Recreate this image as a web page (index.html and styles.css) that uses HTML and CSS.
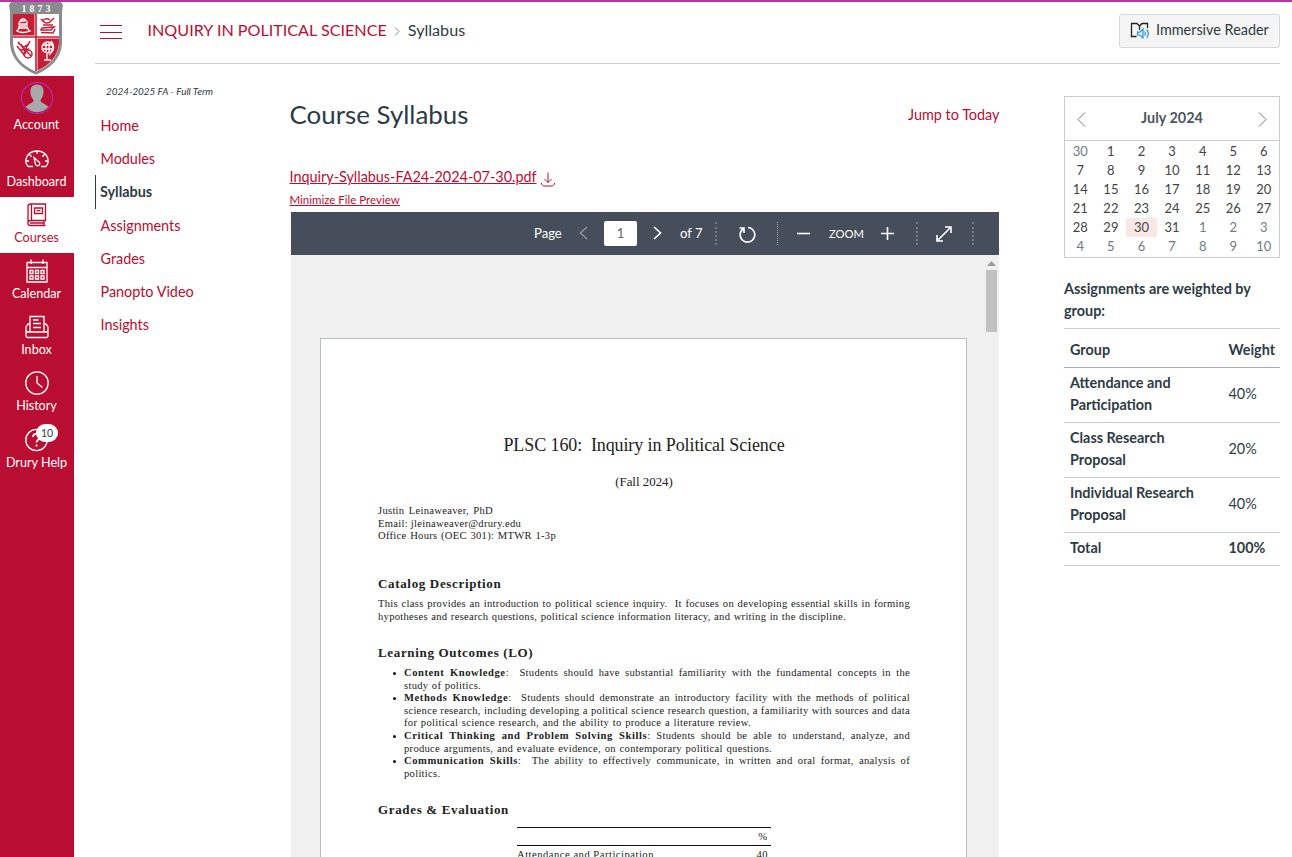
FILE: index.html
```html
<!DOCTYPE html>
<html lang="en">
<head>
<meta charset="utf-8">
<title>Course Syllabus</title>
<link rel="stylesheet" href="styles.css">
</head>
<body>
<div class="app">
  <nav class="rail">
    <a class="logo">
      <svg width="74" height="74" viewBox="0 2 74 74">
        <path d="M11 2H61L63 5L62 12V42C62 58 50 69 36 74.500C22 69 10 58 10 42V12L9 5Z" fill="#888a8e"/>
        <path d="M13 14H59V42C59 56 50 66 36 71.500C22 66 13 56 13 42Z" fill="#fff"/>
        <path d="M13 14H34.500V35.500H13ZM37.500 38.500H59V43C58 56 50 65 37.500 70.500Z" fill="#c51f35"/>
        <path d="M36 14V71M13 37H59" stroke="#c51f35" stroke-width="1.600"/>
        <text x="37.500" y="12" class="logo-year">1873</text>
        <g fill="none" stroke="#fff" stroke-width="1.300">
          <path d="M16.500 31Q20 29 19 23Q23 15 27 22Q26 29 30 31Q23 34 16.500 31M18 28H28M21 21H25M20 24H27M20 26H26" />
          <circle cx="47.500" cy="47.500" r="5.500"/><path d="M43 45H52M43 49H52M46 42V53M49 42V53M51 41Q57 49 49 55M47 54V59M44 60H51"/>
        </g>
        <g fill="none" stroke="#c51f35" stroke-width="1.500"><path d="M41 19Q46 26 51 21L54 18M42 21Q46 17 50 20M43 25H53M42 28L54 27L51 30L41 30ZM41 32.500L53 33L55 29"/><path d="M18 42L31 56M30 41L24 52M18 43L24 47L29 44M20 50L29 49M17 46L25 56M21 44L26 54"/><circle cx="28" cy="54" r="4"/></g>
      </svg>
    </a>
    <a class="rail-item account"><svg width="32" height="32" viewBox="0 0 32 32"><circle cx="16" cy="16" r="15.500" fill="#b90e31" stroke="#b52b9b"/><path stroke="none" d="M16 2.500C20.500 2.500 23 6 22.500 10C22.500 14 21 16 19.500 18C19.500 20 21 20.500 27.500 24.500A14.500 14.500 0 0 1 4.500 24.500C11 20.500 12.500 20 12.500 18C11 16 9.500 14 9.500 10C9 6 11.500 2.500 16 2.500Z" fill="#a7a9ab"/></svg><span>Account</span></a>
    <a class="rail-item"><svg width="24" height="24" viewBox="0 0 24 24"><path d="M3.200 19.500C.8 17 .5 13.500 1.200 11.500C3 6 7 4 12 4S21 6 22.800 11.500C23.500 14 23 17.500 20.800 19.500H16M3.200 19.500H8M12 4V7M4.500 7.500L6.700 9.700M19.500 7.500L17.300 9.700M1 14H4M20 14H23M9 10.500L10.500 17.500A2.200 2.200 0 1 0 14.500 15.500Z"/></svg><span>Dashboard</span></a>
    <a class="rail-item active"><svg width="24" height="24" viewBox="0 0 24 24"><path d="M5.500 1H20.500V17.500H5.500C2 17.500 2 22.500 5.500 22.500H20.500M5.500 1C3.800 1 3 2 3 3.500V20M6.500 1V17.500M9.500 5H17.500V10.500H9.500ZM11.500 7.700H15.500M19 17.500V22.500M5 20H19"/></svg><span>Courses</span></a>
    <a class="rail-item"><svg width="24" height="24" viewBox="0 0 24 24"><path d="M2 3.500H22V23H2ZM2 8.500H22M6 .5V5M18 .5V5M5 11.500H8V14.500H5ZM10.500 11.500H13.500V14.500H10.500ZM16 11.500H19V14.500H16ZM5 17H8V20H5ZM10.500 17H13.500V20H10.500ZM16 17H19V20H16Z"/></svg><span>Calendar</span></a>
    <a class="rail-item"><svg width="24" height="24" viewBox="0 0 24 24"><path d="M5 16.500V1.500H19V16.500M5 9H3L1 12V21Q1 22.500 2.500 22.500H21.500Q23 22.500 23 21V12L21 9H19M1 15Q1 17 3 17H21Q23 17 23 15M8 5H13.500M8 8.500H16M8 12.500H16"/></svg><span>Inbox</span></a>
    <a class="rail-item"><svg width="24" height="24" viewBox="0 0 24 24"><circle cx="12" cy="12" r="11.200"/><path d="M12 5V12L17.500 16.500"/></svg><span>History</span></a>
    <a class="rail-item help"><svg width="24" height="24" viewBox="0 0 24 24"><circle cx="11.500" cy="12" r="10.700"/><path d="M8 9C8 4.500 15 5 15 9C15 12 11.500 11.500 11.500 14.500M11.500 16.500V18.500" stroke-width="1.700"/></svg><b class="badge">10</b><span>Drury Help</span></a>
  </nav>
  <div class="page">
    <header class="top">
      <svg class="burger" width="22" height="16" viewBox="0 0 22 16"><path d="M0 1.500H22M0 8.500H22M0 14.500H22"/></svg>
      <span class="crumb">INQUIRY IN POLITICAL SCIENCE</span>
      <svg class="crumb-sep" width="6" height="9" viewBox="0 0 6 9"><path d="M1 .5L5 4.500L1 8.500"/></svg>
      <span class="crumb-here">Syllabus</span>
      <button class="reader"><svg width="20" height="17" viewBox="0 0 20 17"><path d="M6.500 14.500H1.500V1.500H7L9.500 4L12 1.500H17.500V6M9.500 4V8" fill="none" stroke="#222" stroke-width="1.300"/><path d="M7.500 10.200H10L13 7V16L10 13H7.500ZM14.700 9.500Q16 11.500 14.700 13.800M16.700 7.500Q20 11.500 16.700 16" fill="#f5f5f5" stroke="#2196dc" stroke-width="1.200"/></svg><span>Immersive Reader</span></button>
    </header>
    <div class="body">
      <nav class="menu">
        <div class="term">2024-2025 FA - Full Term</div>
        <a>Home</a><a>Modules</a><a class="on">Syllabus</a><a>Assignments</a><a>Grades</a><a>Panopto Video</a><a>Insights</a>
      </nav>
      <main class="content">
        <div class="title-row"><h1>Course Syllabus</h1><a class="jump">Jump to Today</a></div>
        <div class="file"><a>Inquiry-Syllabus-FA24-2024-07-30.pdf</a><svg width="14" height="15" viewBox="0 0 14 15"><path d="M7 .5V10.500M3.500 7L7 10.500L10.500 7M.5 11V12L2.500 14H11.500L13.500 12V11"/></svg></div>
        <div class="mini"><a>Minimize File Preview</a></div>
        <section class="viewer">
          <div class="toolbar">
            <span class="pg">Page</span>
            <svg class="prev" width="9" height="14" viewBox="0 0 9 14"><path d="M8 1L1.500 7L8 13"/></svg>
            <span class="num">1</span>
            <svg class="next" width="9" height="14" viewBox="0 0 9 14"><path d="M1 1L7.500 7L1 13"/></svg>
            <span class="of">of 7</span>
            <i class="sep wide"></i>
            <svg class="rot" width="17" height="17" viewBox="0 0 17 17"><path d="M9 1.500A7.300 7.300 0 1 1 4 3M.5 2H5V7"/></svg>
            <i class="sep"></i>
            <svg class="minus" width="13" height="13" viewBox="0 0 13 13"><path d="M0 6.500H13"/></svg>
            <span class="zoom">ZOOM</span>
            <svg class="plus" width="13" height="13" viewBox="0 0 13 13"><path d="M0 6.500H13M6.500 0V13"/></svg>
            <i class="sep wide"></i>
            <svg class="full" width="16" height="16" viewBox="0 0 16 16"><path d="M1.500 14.500L14.500 1.500M9 1H15V7M1 9V15H7"/></svg>
            <i class="sep wide"></i>
          </div>
          <div class="pane">
            <article class="sheet">
              <h2>PLSC 160: &nbsp;Inquiry in Political Science</h2>
              <div class="sub">(Fall 2024)</div>
              <div class="who">
                <div class="ln w1">Justin Leinaweaver, PhD</div>
                <div class="ln w2">Email: jleinaweaver@drury.edu</div>
                <div class="ln w3">Office Hours (OEC 301): MTWR 1-3p</div>
              </div>
              <h3 class="h-a">Catalog Description</h3>
              <div class="ln">This class provides an introduction to political science inquiry. &nbsp;It focuses on developing essential skills in forming</div>
              <div class="ln w4">hypotheses and research questions, political science information literacy, and writing in the discipline.</div>
              <h3 class="h-b">Learning Outcomes (LO)</h3>
              <ul>
                <li><div class="ln"><b>Content Knowledge</b>: &nbsp;Students should have substantial familiarity with the fundamental concepts in the</div><div class="ln w5">study of politics.</div></li>
                <li><div class="ln"><b>Methods Knowledge</b>: &nbsp;Students should demonstrate an introductory facility with the methods of political</div><div class="ln">science research, including developing a political science research question, a familiarity with sources and data</div><div class="ln w6">for political science research, and the ability to produce a literature review.</div></li>
                <li><div class="ln"><b>Critical Thinking and Problem Solving Skills</b>: Students should be able to understand, analyze, and</div><div class="ln w7">produce arguments, and evaluate evidence, on contemporary political questions.</div></li>
                <li><div class="ln"><b>Communication Skills</b>: &nbsp;The ability to effectively communicate, in written and oral format, analysis of</div><div class="ln w8">politics.</div></li>
              </ul>
              <h3 class="h-c">Grades &amp; Evaluation</h3>
              <div class="grades"><div class="g-head">%</div><div class="g-row"><span>Attendance and Participation</span><span>40</span></div></div>
            </article>
            <div class="scroll"><svg width="9" height="5" viewBox="0 0 9 5"><path d="M0 5L4.500 0L9 5Z" fill="#9b9b9b"/></svg><div class="thumb"></div></div>
          </div>
        </section>
      </main>
      <aside class="side">
        <div class="cal">
          <div class="cal-head"><svg width="9" height="15" viewBox="0 0 9 15"><path d="M8 .5L1 7.500L8 14.500"/></svg><b>July 2024</b><svg width="9" height="15" viewBox="0 0 9 15"><path d="M1 .5L8 7.500L1 14.500"/></svg></div>
          <div class="days">
            <i>30</i><span>1</span><span>2</span><span>3</span><span>4</span><span>5</span><span>6</span>
            <span>7</span><span>8</span><span>9</span><span>10</span><span>11</span><span>12</span><span>13</span>
            <span>14</span><span>15</span><span>16</span><span>17</span><span>18</span><span>19</span><span>20</span>
            <span>21</span><span>22</span><span>23</span><span>24</span><span>25</span><span>26</span><span>27</span>
            <span>28</span><span>29</span><span class="today">30</span><span>31</span><i>1</i><i>2</i><i>3</i>
            <i>4</i><i>5</i><i>6</i><i>7</i><i>8</i><i>9</i><i>10</i>
          </div>
        </div>
        <div class="w-title">Assignments are weighted by group:</div>
        <div class="weights">
          <div class="wr wh"><b>Group</b><b>Weight</b></div>
          <div class="wr"><b>Attendance and Participation</b><span>40%</span></div>
          <div class="wr"><b>Class Research Proposal</b><span>20%</span></div>
          <div class="wr"><b>Individual Research Proposal</b><span>40%</span></div>
          <div class="wr wt"><b>Total</b><b>100%</b></div>
        </div>
      </aside>
    </div>
  </div>
</div>
</body>
</html>
```
FILE: styles.css
```css
* { box-sizing: border-box; }
body { margin: 0; height: 857px; overflow: hidden; background: #fff; color: #2d3b45; font: 14.4px/22px Lato, sans-serif; }
svg { display: block; flex: none; }
h1, h2, h3, ul { margin: 0; padding: 0; font-weight: 400; }
.app { height: 857px; display: flex; border-top: 2px solid #bf32a4; overflow: hidden; }
.rail { width: 74px; flex: none; background: #b90e31; }
.logo { display: block; height: 74px; background: #fff; }
.logo-year { font: bold 10px "Liberation Serif", serif; letter-spacing: 3px; text-anchor: middle; fill: #fff; }
.rail-item { position: relative; height: 56.2px; padding: 6px 1px 0 0; display: flex; flex-direction: column; align-items: center; color: #fff; font-size: 12.6px; line-height: 18px; white-space: nowrap; }
.rail-item svg { fill: none; stroke: currentColor; stroke-width: 1.3; }
.rail-item span { margin-top: 2px; }
.rail-item.account { height: 64.6px; }
.rail-item.active { background: #fff; color: #b90e31; }
.badge { position: absolute; left: 36px; top: 2px; width: 22px; height: 18px; border-radius: 9px; background: #fff; color: #2d3b45; font-weight: 400; font-size: 10.5px; line-height: 18px; text-align: center; }
.page { flex: 1; padding: 0 12px 0 21px; }
.top { height: 62px; border-bottom: 1px solid #c7cdd1; display: flex; align-items: center; padding-left: 5px; padding-bottom: 4px; white-space: nowrap; }
.burger { stroke: #b90e31; stroke-width: 1.2; margin: 3px 25.5px 0 0; }
.crumb { color: #b90e31; font-size: 16.15px; padding-bottom: 1px; }
.crumb-sep { margin: 2px 8px 0 7px; fill: none; stroke: #7d878e; }
.crumb-here { font-size: 16.15px; padding-bottom: 1px; }
.reader { margin-left: auto; width: 161px; height: 34px; border: 1px solid #d5d9dc; border-radius: 3px; background: #f5f5f5; color: #2d3b45; font: 14.4px Lato, sans-serif; display: flex; align-items: center; gap: 6px; padding: 0 0 2px 10px; white-space: nowrap; }
.reader svg { margin-top: 2px; }
.body { display: flex; }
.menu { width: 194.500px; padding-top: 17px; }
.menu .term { padding-left: 11px; font-size: 9.9px; font-style: italic; line-height: 20px; height: 28.2px; }
.menu a { display: block; height: 33.15px; line-height: 33px; padding-left: 5.500px; color: #b90e31; }
.menu a.on { border-left: 1px solid #2d3b45; padding-left: 4px; color: #2d3b45; font-weight: 700; }
.content { width: 710px; }
.title-row { display: flex; justify-content: space-between; align-items: center; padding-top: 30px; height: 70px; }
h1 { font-size: 25.9px; line-height: 40px; }
.jump { color: #b90e31; padding-top: 2px; }
.file { display: flex; height: 22px; margin-top: 32px; color: #b90e31; gap: 4px; align-items: center; }
.file a, .mini a { text-decoration: underline; color: #b90e31; white-space: nowrap; }
.file svg { fill: none; stroke: #b90e31; margin-top: 4px; }
.mini { height: 24px; line-height: 24px; font-size: 11.5px; }
.viewer { width: 708px; margin-left: 1.500px; }
.toolbar { height: 43px; background: #474e5b; color: #fff; display: flex; align-items: center; font-size: 13.1px; white-space: nowrap; padding: 0 0 1px 243px; }
.toolbar svg { fill: none; stroke: #fff; stroke-width: 1.6; }
.pg { width: 45px; }
.toolbar .prev { stroke: #8b919a; }
.num { width: 33px; height: 25px; margin: 1px 16px 0 16px; border-radius: 2px; background: #fff; color: #666; text-align: center; line-height: 25px; }
.of { margin-left: 18px; width: 35px; }
.sep { height: 23px; border-left: 1px dotted #9aa0a8; width: 1px; }
.sep.wide { border-left: 2px dotted #747a85; width: 2px; }
.rot { margin: 2px 21px 0 22px; }
.minus { margin: 1px 19px 0; }
.zoom { font-size: 11.2px; width: 33px; padding-top: 1px; }
.plus { margin: 1px 22px 0 19px; }
.full { margin: 1px 20px 0 18px; }
.pane { height: 610px; background: #f0f0f0; display: flex; overflow: hidden; padding: 83px 0 0 29px; }
.sheet { width: 647px; height: 900px; flex: none; background: #fff; border: 1px solid #b8bdc3; padding: 94px 56px 0 57px; font-family: "Liberation Serif", serif; color: #222; }
h2 { font-size: 18px; line-height: 24px; text-align: center; white-space: nowrap; letter-spacing: -.1px; }
.sub { margin-top: 15px; font-size: 12.900px; line-height: 20px; text-align: center; }
.who { margin-top: 13px; }
.ln { font-size: 10.600px; line-height: 12.600px; height: 12.600px; text-align: justify; text-align-last: justify; white-space: nowrap; letter-spacing: .28px; }
.ln b { letter-spacing: .56px; }
.w1 { width: 115px; } .w2 { width: 142px; } .w3 { width: 178px; } .w4 { width: 468px; } .w5 { width: 77px; } .w6 { width: 347px; } .w7 { width: 368px; } .w8 { width: 36px; }
h3 { font-size: 13px; line-height: 18px; height: 18px; font-weight: 700; letter-spacing: .66px; }
.h-a { margin: 32px 0 5.4px; }
.h-b { margin: 20.6px 0 5px; }
.h-c { margin: 21px 0 8px; }
ul { padding-left: 26px; list-style: none; }
li { position: relative; }
li::before { content: ""; position: absolute; left: -11px; top: 5px; width: 3px; height: 3px; border-radius: 50%; background: #111; }
.grades { width: 254px; margin-left: 139px; border-top: 1px solid #111; font-size: 10.600px; }
.g-head { text-align: right; padding-right: 4px; height: 18px; line-height: 18px; border-bottom: 1px solid #111; }
.g-row { display: flex; justify-content: space-between; line-height: 18px; padding-right: 3px; letter-spacing: .5px; }
.scroll { width: 13px; margin: -77px 0 0 18px; display: flex; flex-direction: column; align-items: center; }
.thumb { width: 11px; height: 62px; margin-top: 4px; background: #c1c1c1; }
.side { margin-left: 64.500px; width: 216px; padding-top: 32px; }
.cal { height: 162px; border: 1px solid #c7cdd1; }
.cal-head { height: 44px; border-bottom: 1px solid #c7cdd1; display: flex; justify-content: space-between; align-items: center; padding: 0 12px; color: #4a5660; font-size: 14.4px; }
.cal-head b { padding-bottom: 2px; }
.cal-head svg { fill: none; stroke: #737b82; margin-top: 2px; }
.days { display: grid; grid-template-columns: repeat(7, 30.6px); grid-auto-rows: 19px; padding-top: 1px; text-align: center; font-size: 13px; line-height: 18px; color: #444; }
.days i { font-style: normal; color: #6f7b84; }
.today { background: #f9e8e6; border-radius: 2px; }
.w-title { margin-top: 20px; height: 51px; font-weight: 700; border-bottom: 1px solid #c7cdd1; }
.wr { display: flex; align-items: center; height: 55px; border-bottom: 1px solid #c7cdd1; padding: 0 0 2px 6px; }
.wr > :first-child { width: 158.500px; padding-right: 20px; }
.wh { height: 39px; padding-top: 4px; padding-bottom: 0; border-color: #a5acb2; }
.wt { height: 33px; padding-bottom: 3px; }
```
